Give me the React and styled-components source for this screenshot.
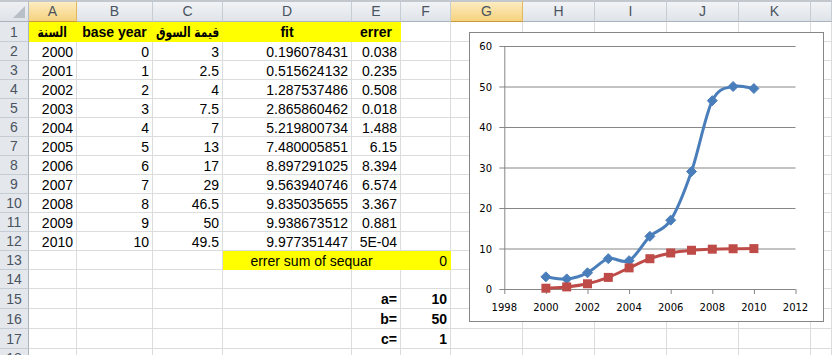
import React from "react";
import styled, { createGlobalStyle, css } from "styled-components";

const GlobalStyle = createGlobalStyle`
  html, body { margin: 0; padding: 0; background: #fff; overflow: hidden; }
  body { font-family: "Liberation Sans", "DejaVu Sans", Arial, sans-serif; }
  #root { width: 832px; height: 355px; overflow: hidden; }
`;

const COLS = ["A", "B", "C", "D", "E", "F", "G", "H", "I", "J", "K", ""];
const ROW_HEIGHTS = [20, 19, 19, 19, 19, 19, 19, 19, 19, 19, 19, 19, 19, 19, 20, 20, 20, 19];

const Page = styled.div`
  position: relative;
  width: 832px;
  height: 355px;
  overflow: hidden;
`;

const Sheet = styled.div`
  display: grid;
  grid-template-columns: 29px 48px 76px 70px 129px 49px 50px 72px 72px 72px 72px 72px 1fr;
  grid-template-rows: 22px ${ROW_HEIGHTS.map((h) => h + "px").join(" ")};
  font-size: 14px;
  color: #000;
`;

const Corner = styled.div`
  position: relative;
  box-sizing: border-box;
  border-top: 2px solid #c3c8cf;
  border-right: 1px solid #b6bec8;
  border-bottom: 1px solid #aab3be;
  background: linear-gradient(#eef0f3, #dfe3e8);
  &::after {
    content: "";
    position: absolute;
    right: 3px;
    bottom: 3px;
    width: 0;
    height: 0;
    border-left: 12px solid transparent;
    border-bottom: 12px solid #b8bfc7;
  }
`;

const ColHeader = styled.div`
  box-sizing: border-box;
  border-top: 2px solid #c3c8cf;
  border-right: 1px solid #c6ccd4;
  border-bottom: 1px solid #aab3be;
  background: linear-gradient(#f1f3f6, #dfe3e8);
  color: #4a5360;
  font-size: 14px;
  line-height: 19px;
  text-align: center;
  ${(p) =>
    p.$selected &&
    css`
      background: linear-gradient(#fcecc0, #f6d27e);
      border-right-color: #e2b85e;
      border-bottom-color: #c99a3c;
    `}
`;

const RowNum = styled.div`
  box-sizing: border-box;
  border-right: 1px solid #aab3be;
  border-bottom: 1px solid #c6ccd4;
  background: #e4e8ed;
  color: #4a5360;
  font-size: 14px;
  text-align: center;
  display: flex;
  align-items: center;
  justify-content: center;
`;

const Cell = styled.div`
  box-sizing: border-box;
  border-right: 1px solid #dadcdd;
  border-bottom: 1px solid #dadcdd;
  padding: 1px 3px 0 3px;
  display: flex;
  align-items: center;
  white-space: nowrap;
  overflow: visible;
  justify-content: ${(p) =>
    p.$align === "center" ? "center" : p.$align === "left" ? "flex-start" : "flex-end"};
  font-weight: ${(p) => (p.$bold ? 700 : 400)};
  grid-column: span ${(p) => p.$span || 1};
  ${(p) =>
    p.$fill &&
    css`
      background: ${p.$fill};
      border-color: ${p.$fill};
    `}
`;

const ArabicText = styled.span`
  font-family: "DejaVu Sans", sans-serif;
  font-size: 14px;
  font-weight: 700;
  display: inline-block;
  transform: scaleX(0.76);
  direction: rtl;
`;

const Y = "#ffff00";

const years = [2000, 2001, 2002, 2003, 2004, 2005, 2006, 2007, 2008, 2009, 2010];
const market = [3, 2.5, 4, 7.5, 7, 13, 17, 29, 46.5, 50, 49.5];
const marketText = ["3", "2.5", "4", "7.5", "7", "13", "17", "29", "46.5", "50", "49.5"];
const fit = [
  "0.196078431", "0.515624132", "1.287537486", "2.865860462", "5.219800734",
  "7.480005851", "8.897291025", "9.563940746", "9.835035655", "9.938673512", "9.977351447",
];
const err = ["0.038", "0.235", "0.508", "0.018", "1.488", "6.15", "8.394", "6.574", "3.367", "0.881", "5E-04"];

function buildRows() {
  const rows = [];
  rows.push([
    { t: <ArabicText>السنة</ArabicText>, align: "center", bold: true, fill: Y },
    { t: "base year", align: "center", bold: true, fill: Y },
    { t: <ArabicText>قيمة السوق</ArabicText>, align: "center", bold: true, fill: Y },
    { t: "fit", align: "center", bold: true, fill: Y },
    { t: "errer", align: "center", bold: true, fill: Y },
  ]);
  years.forEach((y, i) => {
    rows.push([
      { t: String(y) },
      { t: String(i) },
      { t: marketText[i] },
      { t: fit[i] },
      { t: err[i] },
    ]);
  });
  rows.push([{}, {}, {}, { t: "errer sum of sequar", align: "center", fill: Y, span: 2 }, { t: "0", fill: Y }]);
  rows.push([]);
  rows.push([{}, {}, {}, {}, { t: "a=", bold: true }, { t: "10", bold: true }]);
  rows.push([{}, {}, {}, {}, { t: "b=", bold: true }, { t: "50", bold: true }]);
  rows.push([{}, {}, {}, {}, { t: "c=", bold: true }, { t: "1", bold: true }]);
  rows.push([]);
  return rows;
}

function fillRow(row) {
  const out = [...row];
  let used = out.reduce((s, c) => s + (c.span || 1), 0);
  while (used < 12) {
    out.push({});
    used += 1;
  }
  return out;
}

/* ---------- Chart ---------- */

const ChartBox = styled.div`
  position: absolute;
  left: 469px;
  top: 32px;
  width: 355px;
  height: 290px;
  box-sizing: border-box;
  background: #fff;
  border: 1px solid #868686;
`;

const AX = 34.3;
const X_STEP = 20.8;
const Y0 = 256;
const Y_UNIT = 4.05;
const xOf = (yr) => AX + (yr - 1998) * X_STEP;
const yOf = (v) => Y0 - v * Y_UNIT;

function smoothPath(pts) {
  let d = `M${pts[0][0].toFixed(2)},${pts[0][1].toFixed(2)}`;
  for (let i = 0; i < pts.length - 1; i++) {
    const p0 = pts[i - 1] || pts[i];
    const p1 = pts[i];
    const p2 = pts[i + 1];
    const p3 = pts[i + 2] || p2;
    const c1 = [p1[0] + (p2[0] - p0[0]) / 6, p1[1] + (p2[1] - p0[1]) / 6];
    const c2 = [p2[0] - (p3[0] - p1[0]) / 6, p2[1] - (p3[1] - p1[1]) / 6];
    d += ` C${c1[0].toFixed(2)},${c1[1].toFixed(2)} ${c2[0].toFixed(2)},${c2[1].toFixed(2)} ${p2[0].toFixed(2)},${p2[1].toFixed(2)}`;
  }
  return d;
}

function Chart() {
  const blue = years.map((y, i) => [xOf(y), yOf(market[i])]);
  const red = years.map((y, i) => [xOf(y), yOf(parseFloat(fit[i]))]);
  const gridVals = [0, 10, 20, 30, 40, 50, 60];
  const xLabels = [1998, 2000, 2002, 2004, 2006, 2008, 2010, 2012];
  const right = xOf(2012);
  return (
    <ChartBox>
      <svg width="353" height="288" viewBox="0 0 353 288" style={{ display: "block" }}>
        {gridVals.map((v) => (
          <g key={v}>
            <line x1={AX - 5} x2={right} y1={yOf(v) + 0.5} y2={yOf(v) + 0.5} stroke="#868686" strokeWidth="1" />
            <text
              x={22}
              y={yOf(v) + 4}
              textAnchor="end"
              fontFamily="DejaVu Sans, sans-serif"
              fontSize="10"
              fill="#000"
            >
              {v}
            </text>
          </g>
        ))}
        <line x1={AX + 0.5} x2={AX + 0.5} y1={yOf(60)} y2={Y0 + 1} stroke="#868686" strokeWidth="1" />
        {xLabels.map((yr) => (
          <g key={yr}>
            <line x1={xOf(yr) + 0.5} x2={xOf(yr) + 0.5} y1={Y0} y2={Y0 + 5} stroke="#868686" strokeWidth="1" />
            <text
              x={xOf(yr)}
              y={Y0 + 22}
              textAnchor="middle"
              fontFamily="DejaVu Sans, sans-serif"
              fontSize="10"
              fill="#000"
            >
              {yr}
            </text>
          </g>
        ))}
        <path d={smoothPath(blue)} fill="none" stroke="#4a7ebb" strokeWidth="3" strokeLinejoin="round" />
        {blue.map(([x, y], i) => (
          <polygon
            key={"d" + i}
            points={`${x},${y - 5} ${x + 5},${y} ${x},${y + 5} ${x - 5},${y}`}
            fill="#4a7ebb"
            stroke="#4a7ebb"
            strokeWidth="1"
          />
        ))}
        <path d={smoothPath(red)} fill="none" stroke="#be4b48" strokeWidth="3" strokeLinejoin="round" />
        {red.map(([x, y], i) => (
          <rect key={"s" + i} x={x - 4.5} y={y - 4.5} width="9" height="9" fill="#be4b48" />
        ))}
      </svg>
    </ChartBox>
  );
}

export default function App() {
  const rows = buildRows();
  return (
    <>
      <GlobalStyle />
      <Page>
        <Sheet>
          <Corner />
          {COLS.map((c, i) => (
            <ColHeader key={"h" + i} $selected={c === "A" || c === "G"}>
              {c}
            </ColHeader>
          ))}
          {rows.map((row, r) => (
            <React.Fragment key={"r" + r}>
              <RowNum>{r + 1}</RowNum>
              {fillRow(row).map((cell, c) => (
                <Cell
                  key={c}
                  $align={cell.align}
                  $bold={cell.bold}
                  $fill={cell.fill}
                  $span={cell.span}
                >
                  {cell.t || ""}
                </Cell>
              ))}
            </React.Fragment>
          ))}
        </Sheet>
        <Chart />
      </Page>
    </>
  );
}
